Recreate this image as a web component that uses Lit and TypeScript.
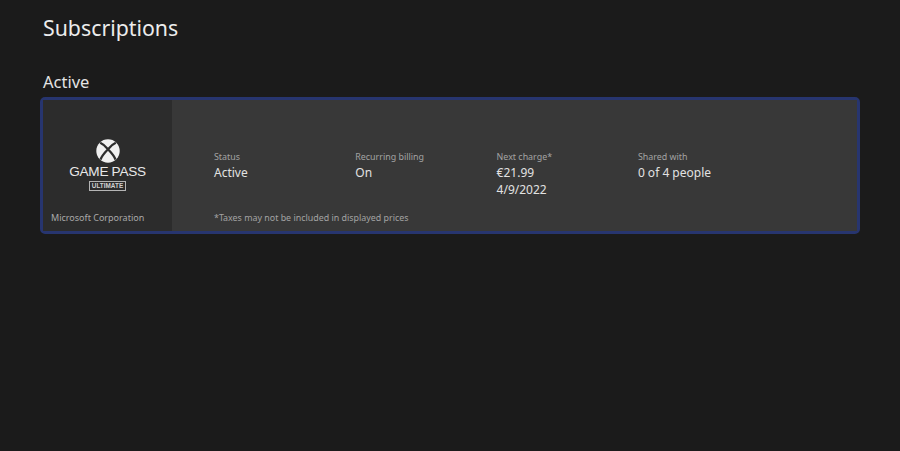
import { LitElement, html, css } from "lit";
import { customElement } from "lit/decorators.js";

@customElement("app-root")
export class AppRoot extends LitElement {
  static styles = css`
    :host {
      display: block;
      width: 900px;
      height: 451px;
      overflow: hidden;
      background: #1b1b1b;
      color: #e6e6e6;
      font-family: "Noto Sans", "Open Sans", sans-serif;
      box-sizing: border-box;
      padding: 13px 40px 0;
    }
    h1 {
      margin: 0 0 0 3px;
      font-size: 21.3px;
      line-height: 30px;
      font-weight: 400;
      color: #ececec;
    }
    h2 {
      margin: 28px 0 0 3px;
      font-size: 16.5px;
      line-height: 22px;
      font-weight: 400;
      color: #e4e4e4;
    }
    .ring {
      margin-top: 4px;
      width: 820px;
      height: 137px;
      box-sizing: border-box;
      border: 3px solid #27356f;
      border-radius: 5px;
      background: #1e1e22;
      display: flex;
    }
    .tile {
      width: 129px;
      background: #2c2c2c;
      display: flex;
      flex-direction: column;
      align-items: center;
      padding-top: 39px;
      box-sizing: border-box;
      position: relative;
    }
    .logo {
      display: block;
    }
    .gp {
      font-family: "Liberation Sans", sans-serif;
      font-size: 13.6px;
      line-height: 15px;
      letter-spacing: -0.3px;
      color: #e8e8e8;
      margin-top: 1px;
    }
    .ult {
      font-family: "Liberation Sans", sans-serif;
      font-weight: 700;
      font-size: 6.4px;
      line-height: 8px;
      letter-spacing: 0;
      color: #d0d0d0;
      border: 1px solid #b4b4b4;
      padding: 0 2px;
      margin-top: 2px;
    }
    .corp {
      position: absolute;
      left: 8px;
      bottom: 7px;
      font-size: 9px;
      line-height: 13px;
      color: #a9a9a9;
    }
    .body {
      flex: 1;
      background: #383838;
      padding: 50px 0 0 42px;
      box-sizing: border-box;
      display: flex;
      flex-direction: column;
    }
    .cols {
      display: grid;
      grid-template-columns: repeat(4, 141.3px);
      height: 61px;
    }
    .label {
      font-size: 8.9px;
      line-height: 13px;
      color: #a3a3a3;
      margin-bottom: 1px;
    }
    .val {
      font-size: 12px;
      line-height: 17px;
      color: #e2e2e2;
    }
    .note {
      font-size: 8.9px;
      line-height: 13px;
      color: #a3a3a3;
    }
  `;

  render() {
    const cols: [string, string[]][] = [
      ["Status", ["Active"]],
      ["Recurring billing", ["On"]],
      ["Next charge*", ["€21.99", "4/9/2022"]],
      ["Shared with", ["0 of 4 people"]],
    ];
    return html`
      <h1>Subscriptions</h1>
      <h2>Active</h2>
      <div class="ring">
        <div class="tile">
          <svg class="logo" width="24" height="24" viewBox="0 0 24 24" aria-hidden="true">
            <circle cx="12" cy="12" r="11.7" fill="#efefef" />
            <path
              d="M4.2 3.8C7.4 5.2 10 7.8 12 10.2 15 13.3 18.4 17 19.5 20.6M19.8 3.8C16.6 5.2 14 7.8 12 10.2 9 13.3 5.6 17 4.5 20.6"
              fill="none"
              stroke="#2c2c2c"
              stroke-width="2.3"
            />
          </svg>
          <div class="gp">GAME PASS</div>
          <div class="ult">ULTIMATE</div>
          <div class="corp">Microsoft Corporation</div>
        </div>
        <div class="body">
          <div class="cols">
            ${cols.map(
              ([l, vs]) => html`<div>
                <div class="label">${l}</div>
                ${vs.map((v) => html`<div class="val">${v}</div>`)}
              </div>`
            )}
          </div>
          <div class="note">*Taxes may not be included in displayed prices</div>
        </div>
      </div>
    `;
  }
}
